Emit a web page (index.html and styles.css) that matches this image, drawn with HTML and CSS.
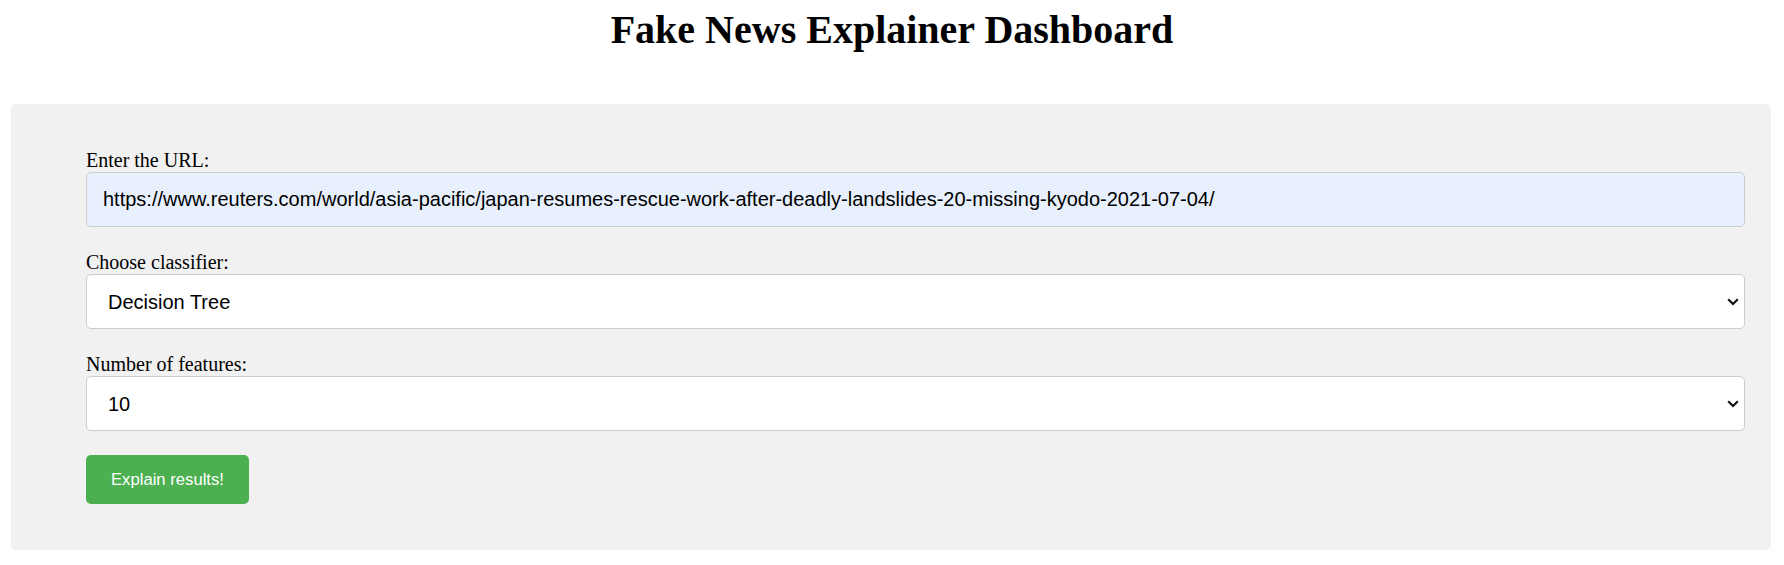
FILE: index.html
```html
<!DOCTYPE html>
<html lang="en">
<head>
<meta charset="utf-8">
<title>Fake News Explainer Dashboard</title>
<link rel="stylesheet" href="styles.css">
</head>
<body>
<h1 class="title">Fake News Explainer Dashboard</h1>
<div class="panel">
  <form class="form">
    <div class="group">
      <label class="label" for="url">Enter the URL:</label>
      <input class="field field-url" id="url" type="text" value="https://www.reuters.com/world/asia-pacific/japan-resumes-rescue-work-after-deadly-landslides-20-missing-kyodo-2021-07-04/">
    </div>
    <div class="group">
      <label class="label" for="clf">Choose classifier:</label>
      <div class="select-wrap">
        <select class="field field-select" id="clf">
          <option>Decision Tree</option>
          <option>Logistic Regression</option>
          <option>Random Forest</option>
        </select>
        <svg class="chevron" width="12" height="8" viewBox="0 0 12 8"><path d="M1.2 1.3 L6 6 L10.8 1.3" fill="none" stroke="#111" stroke-width="2.2"/></svg>
      </div>
    </div>
    <div class="group">
      <label class="label" for="nf">Number of features:</label>
      <div class="select-wrap">
        <select class="field field-select" id="nf">
          <option>10</option>
          <option>5</option>
          <option>15</option>
        </select>
        <svg class="chevron" width="12" height="8" viewBox="0 0 12 8"><path d="M1.2 1.3 L6 6 L10.8 1.3" fill="none" stroke="#111" stroke-width="2.2"/></svg>
      </div>
    </div>
    <div class="actions">
      <button class="btn" type="button">Explain results!</button>
    </div>
  </form>
</div>
</body>
</html>
```

FILE: styles.css
```css
html, body {
  background: #ffffff;
}

body {
  margin: 0;
  font-family: "Liberation Serif", "Times New Roman", serif;
  color: #000;
}

.title {
  margin: 8px 0 52px;
  font-size: 40px;
  line-height: 44px;
  font-weight: bold;
  text-align: center;
}

.panel {
  margin: 0 13px 15px 11px;
  padding: 45px 26px 46px 75px;
  background: #f1f1f1;
  border-radius: 5px;
}

.form {
  display: flex;
  flex-direction: column;
  gap: 24px;
}

.group {
  display: flex;
  flex-direction: column;
  gap: 1px;
}

.label {
  display: block;
  font-size: 20px;
  line-height: 22px;
  color: #000;
}

.field {
  box-sizing: border-box;
  width: 100%;
  height: 55px;
  margin: 0;
  border: 1px solid #cccccc;
  border-radius: 5px;
  font-family: "Liberation Sans", Arial, sans-serif;
  font-size: 20px;
  color: #000;
  outline: none;
}

.field-url {
  background: #e8f0fe;
  padding: 0 16px;
}

.select-wrap {
  position: relative;
}

.field-select {
  appearance: none;
  -webkit-appearance: none;
  background: #ffffff;
  padding: 0 40px 0 21px;
}

.chevron {
  position: absolute;
  right: 6px;
  top: 50%;
  margin-top: -4px;
  pointer-events: none;
}

.actions {
  display: flex;
}

.btn {
  height: 49px;
  padding: 0 25px;
  border: none;
  border-radius: 5px;
  background: #4caf50;
  color: #ffffff;
  font-family: "Liberation Sans", Arial, sans-serif;
  font-size: 16.67px;
  cursor: pointer;
}
```
